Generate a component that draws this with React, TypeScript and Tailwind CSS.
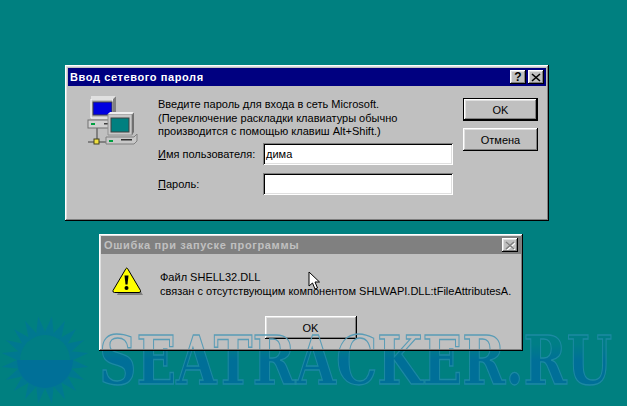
const raised = "shadow-[inset_-1px_-1px_0_#000000,inset_1px_1px_0_#ffffff,inset_-2px_-2px_0_#808080,inset_2px_2px_0_#dfdfdf]";
const sunken = "shadow-[inset_1px_1px_0_#808080,inset_-1px_-1px_0_#ffffff,inset_2px_2px_0_#000000,inset_-2px_-2px_0_#dfdfdf]";
const ui = "font-['Liberation_Sans',Arial,sans-serif] text-[11px] leading-[14px] text-black";

function NetIcon() {
  return (
    <svg width="55" height="55" viewBox="0 0 55 55" className="block">
      <path d="M13 33V47M4 47H24" stroke="#808080" strokeWidth="2" fill="none" />
      <path d="M7 4h22v19H7z" fill="#c0c0c0" stroke="#fff" strokeWidth="1" />
      <path d="M29 4l3-3v18l-3 4z" fill="#808080" />
      <path d="M7 1h25l-3 3H7z" fill="#e0e0e0" />
      <rect x="9" y="7" width="19" height="13" fill="#0000e0" stroke="#404040" />
      <rect x="4" y="25" width="26" height="8" fill="#d0d0d0" stroke="#707070" />
      <rect x="7" y="28" width="4" height="2" fill="#00a040" />
      <rect x="20" y="28" width="8" height="1.5" fill="#404040" />
      <rect x="10" y="44" width="5" height="5" fill="#f0e040" stroke="#404020" />
      <path d="M24 19h24v21H24z" fill="#c8c8c8" stroke="#909090" />
      <path d="M48 20l2-3v20l-2 3z" fill="#707070" />
      <path d="M24 19l2-2h24l-2 2z" fill="#efefef" />
      <rect x="27" y="23" width="18" height="14" fill="#008080" stroke="#404040" />
      <path d="M22 42h28l3-3v7l-3 3H22z" fill="#c8c8c8" stroke="#808080" />
      <rect x="25" y="45" width="4" height="2" fill="#00a040" />
      <rect x="37" y="44" width="11" height="1.5" fill="#303030" />
    </svg>
  );
}

function WarnIcon() {
  return (
    <svg width="32" height="30" viewBox="0 0 32 30" className="block">
      <path d="M16 3L31 28H5z" fill="#808080" />
      <path d="M14 1.5L1 23.5Q0.5 25.5 2.5 25.5H27Q29 25.5 28.5 23.5L15.5 1.5Q14.7 0.5 14 1.5z" fill="#ffff00" stroke="#000" strokeWidth="1" />
      <path d="M12.5 8.5h4l-1 9h-2z" fill="#000" />
      <circle cx="14.5" cy="21" r="2" fill="#000" />
    </svg>
  );
}

function Cross({ color, shade }: { color: string; shade?: string }) {
  return (
    <svg width="10" height="9" viewBox="0 0 10 9" className="block">
      {shade && <path d="M2 2L10 9M10 2L2 9" stroke={shade} strokeWidth="1.4" />}
      <path d="M1 1L9 8M9 1L1 8" stroke={color} strokeWidth="1.6" />
    </svg>
  );
}

function Sun() {
  const rays = Array.from({ length: 20 }, (_, i) => (i * 360) / 20);
  return (
    <svg width="96" height="96" viewBox="-48 -48 96 96" className="block">
      {rays.map((a) => (
        <polygon key={a} points="-6,-22 6,-22 0,-44" fill="#007890" transform={`rotate(${a + 9})`} />
      ))}
      <path d="M-25 0A25 25 0 0 1 25 0z" fill="#007e84" />
      <path d="M-28 0A28 28 0 0 0 28 0z" fill="#007098" />
    </svg>
  );
}

export default function App() {
  return (
    <div className={`relative w-[627px] h-[406px] overflow-hidden bg-[#008080] ${ui}`}>
      {/* watermark fill, under the windows */}
      <div className="absolute left-[-3px] top-[312px]"><Sun /></div>
      <div
        aria-hidden
        className="absolute left-[99px] top-[319px] whitespace-nowrap font-['DejaVu_Serif',serif] font-bold text-[52px] leading-[64px] origin-top scale-y-[1.3] bg-gradient-to-b from-[#007e86] from-30% to-[#006f98] to-50% bg-clip-text text-transparent [-webkit-text-stroke:1px_#1c8aa2]"
      >
        SEATRACKER.RU
      </div>

      {/* password window */}
      <div className={`absolute left-[65px] top-[65px] w-[484px] h-[156px] bg-[#c0c0c0] p-[3px] ${raised}`}>
        <div className="flex h-[18px] items-center justify-between bg-[#000080] pl-[2px] pr-[2px]">
          <span className="font-bold text-white tracking-[0.6px]">Ввод сетевого пароля</span>
          <div className="flex gap-[2px]">
            <div className={`flex h-[14px] w-[16px] items-center justify-center bg-[#c0c0c0] font-bold text-[12px] ${raised}`}>?</div>
            <div className={`flex h-[14px] w-[16px] items-center justify-center bg-[#c0c0c0] ${raised}`}><Cross color="#000" /></div>
          </div>
        </div>
        <div className="flex pt-[8px]">
          <div className="ml-[16px] w-[74px] shrink-0 pt-[1px]"><NetIcon /></div>
          <div className="w-[295px] shrink-0 pt-[4px]">
            <p className="whitespace-nowrap leading-[13.5px]">Введите пароль для входа в сеть Microsoft.</p>
            <p className="whitespace-nowrap leading-[13.5px]">(Переключение раскладки клавиатуры обычно</p>
            <p className="whitespace-nowrap leading-[13.5px]">производится с помощью клавиш Alt+Shift.)</p>
            <div className="mt-[4px] flex items-center">
              <span className="w-[105px] shrink-0 whitespace-nowrap"><u>И</u>мя пользователя:</span>
              <div className={`flex h-[22px] w-[190px] items-center bg-white pl-[3px] ${sunken}`}>дима</div>
            </div>
            <div className="mt-[8px] flex items-center">
              <span className="w-[105px] shrink-0"><u>П</u>ароль:</span>
              <div className={`h-[22px] w-[190px] bg-white ${sunken}`} />
            </div>
          </div>
          <div className="ml-[10px] flex w-[75px] shrink-0 flex-col gap-[7px] pt-[4px]">
            <div className="border border-black">
              <div className={`flex h-[21px] items-center justify-center bg-[#c0c0c0] ${raised}`}>OK</div>
            </div>
            <div className={`flex h-[23px] items-center justify-center bg-[#c0c0c0] ${raised}`}>Отмена</div>
          </div>
        </div>
      </div>

      {/* error window */}
      <div className={`absolute left-[99px] top-[234px] w-[424px] h-[117px] bg-[#c0c0c0] p-[2px] ${raised}`}>
        <div className="flex h-[18px] items-center justify-between bg-[#808080] pl-[3px] pr-[3px]">
          <span className="font-bold text-[#c0c0c0] tracking-[0.65px]">Ошибка при запуске программы</span>
          <div className={`flex h-[14px] w-[16px] items-center justify-center bg-[#c0c0c0] ${raised}`}><Cross color="#808080" shade="#ffffff" /></div>
        </div>
        <div className="flex pt-[13px]">
          <div className="ml-[11px] w-[48px] shrink-0"><WarnIcon /></div>
          <div className="whitespace-nowrap pt-[3px] leading-[14px]">
            <p>Файл SHELL32.DLL</p>
            <p>связан с отсутствующим компонентом SHLWAPI.DLL:tFileAttributesA.</p>
          </div>
        </div>
        <div className="flex justify-center pt-[18px]">
          <div className={`ml-[-1px] flex h-[23px] w-[92px] items-center justify-center bg-[#c0c0c0] ${raised}`}>OK</div>
        </div>
        {/* watermark outline where it crosses this window */}
        <div className="pointer-events-none absolute inset-x-0 top-0 bottom-[2px] overflow-hidden">
          <div
            aria-hidden
            className="absolute left-0 top-[85px] whitespace-nowrap font-['DejaVu_Serif',serif] font-bold text-[52px] leading-[64px] origin-top scale-y-[1.3] text-transparent [-webkit-text-stroke:1px_#5a9cb6]"
          >
            SEATRACKER.RU
          </div>
        </div>
      </div>

      {/* mouse pointer */}
      <svg width="13" height="20" viewBox="0 0 13 20" className="absolute left-[308px] top-[271px]">
        <path d="M1 1V15L4.5 12L7 18L9.5 17L7 11H11.5z" fill="#fff" stroke="#000" strokeWidth="1" />
      </svg>
    </div>
  );
}
